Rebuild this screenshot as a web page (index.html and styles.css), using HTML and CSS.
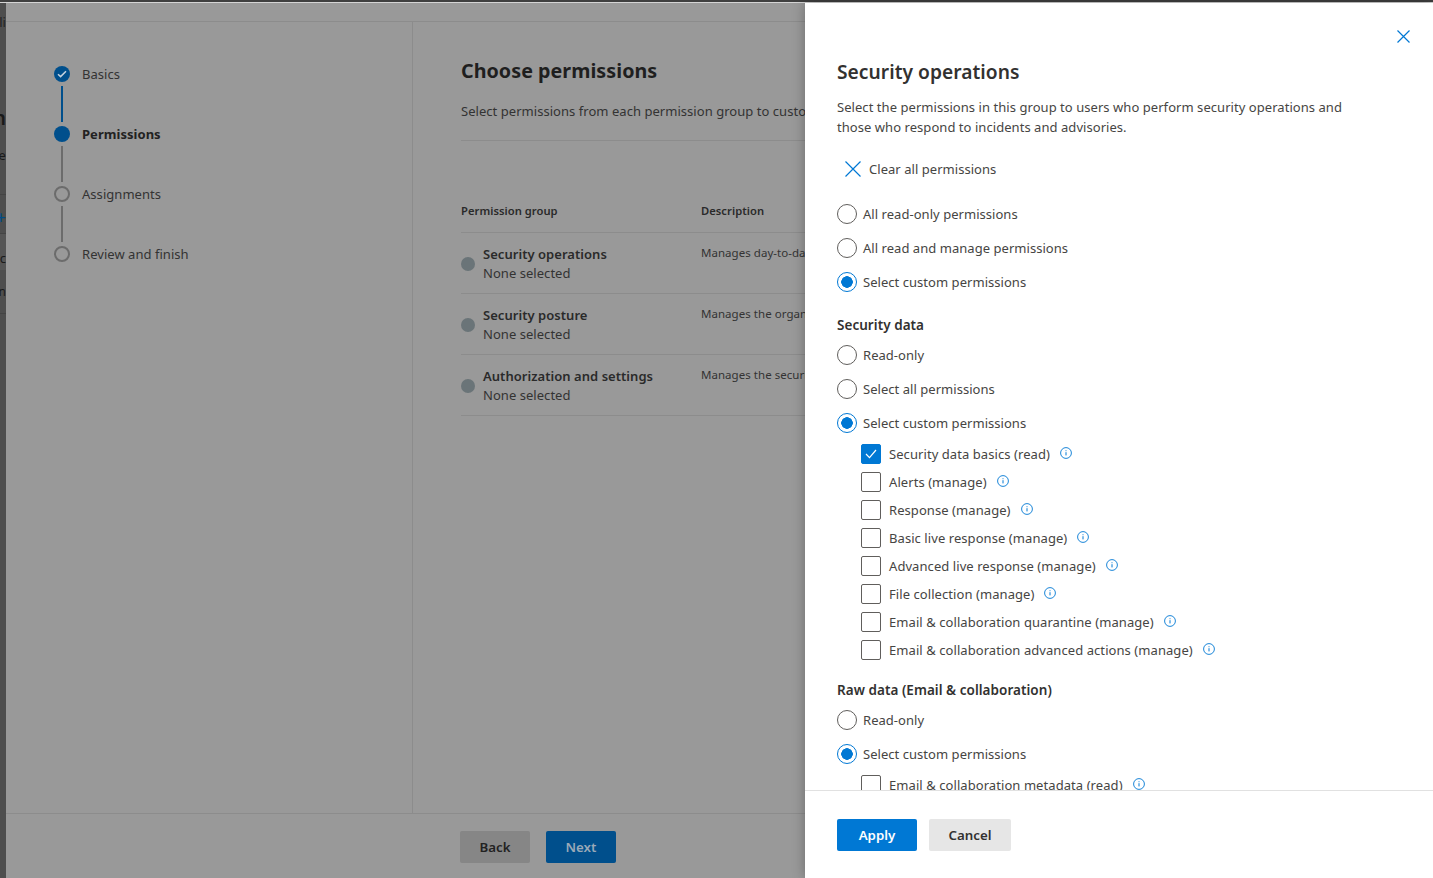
FILE: index.html
```html
<!DOCTYPE html>
<html lang="en">
<head>
  <meta charset="UTF-8">
  <title>Choose permissions</title>
  <link rel="stylesheet" href="styles.css">
</head>
<body>

<svg class="defs" width="0" height="0">
  <symbol id="info" viewBox="0 0 12 12">
    <circle cx="6" cy="6" r="5.4" fill="none" stroke="currentColor" stroke-width="0.9"/>
    <path d="M6 5.2v3.2M6 3.3v0.9" fill="none" stroke="currentColor" stroke-width="1"/>
  </symbol>
  <symbol id="cross" viewBox="0 0 16 16">
    <path d="M0.5 0.5l15 15M15.5 0.5l-15 15" fill="none" stroke="currentColor" stroke-width="1.2"/>
  </symbol>
  <symbol id="cross-small" viewBox="0 0 13 13">
    <path d="M0.5 0.5l12 12M12.5 0.5l-12 12" fill="none" stroke="currentColor" stroke-width="1.2"/>
  </symbol>
</svg>

<div class="topbar"></div>

<div class="page">
  <div class="strip">
    <div class="strip-row strip-nav"><span>Ali</span></div>
    <div class="strip-row strip-title"><span>Roles in</span></div>
    <div class="strip-row strip-sub"><span>Create</span></div>
    <div class="strip-row strip-add"><span>+</span></div>
    <div class="strip-row strip-cell"><span>Name c</span></div>
    <div class="strip-row strip-item"><span>Admin</span></div>
  </div>

  <div class="wizard">
    <div class="wizard-top"></div>

    <div class="wizard-body">
      <nav class="steps">
        <div class="step">
          <span class="dot dot-done">
            <svg width="10" height="8" viewBox="0 0 10 8"><path d="M1 4.2l2.6 2.4L9 1.2" fill="none" stroke="#c4d2de" stroke-width="1.5"/></svg>
          </span>
          <span class="step-name">Basics</span>
        </div>
        <div class="link link-done"></div>
        <div class="step">
          <span class="dot dot-current"></span>
          <span class="step-name step-bold">Permissions</span>
        </div>
        <div class="link"></div>
        <div class="step">
          <span class="dot"></span>
          <span class="step-name">Assignments</span>
        </div>
        <div class="link"></div>
        <div class="step">
          <span class="dot"></span>
          <span class="step-name">Review and finish</span>
        </div>
      </nav>

      <main class="content">
        <h1 class="content-title">Choose permissions</h1>
        <p class="content-sub">Select permissions from each permission group to customize what users assigned to this role can do.</p>

        <div class="table-head">
          <div class="col-group">Permission group</div>
          <div class="col-desc">Description</div>
        </div>

        <div class="table-row">
          <div class="col-group group-cell">
            <span class="status"></span>
            <div>
              <div class="group-name">Security operations</div>
              <div class="group-state">None selected</div>
            </div>
          </div>
          <div class="col-desc desc-cell">Manages day-to-day operations and responding to incidents and advisories</div>
        </div>
        <div class="table-row">
          <div class="col-group group-cell">
            <span class="status"></span>
            <div>
              <div class="group-name">Security posture</div>
              <div class="group-state">None selected</div>
            </div>
          </div>
          <div class="col-desc desc-cell">Manages the organization's security posture and vulnerabilities</div>
        </div>
        <div class="table-row">
          <div class="col-group group-cell">
            <span class="status"></span>
            <div>
              <div class="group-name">Authorization and settings</div>
              <div class="group-state">None selected</div>
            </div>
          </div>
          <div class="col-desc desc-cell">Manages the security settings and authorization of the system</div>
        </div>
      </main>
    </div>

    <div class="wizard-foot">
      <button class="btn btn-back">Back</button>
      <button class="btn btn-next">Next</button>
    </div>
  </div>

  <aside class="panel">
    <div class="panel-scroll">
      <div class="panel-close">
        <svg class="icon-close"><use href="#cross-small"/></svg>
      </div>
      <h2 class="panel-title">Security operations</h2>
      <p class="panel-desc">Select the permissions in this group to users who perform security operations and<br>those who respond to incidents and advisories.</p>

      <div class="clear-all">
        <svg class="icon-clear"><use href="#cross"/></svg>
        <span>Clear all permissions</span>
      </div>

      <div class="radio-group">
        <div class="radio"><span class="radio-mark"></span>All read-only permissions</div>
        <div class="radio"><span class="radio-mark"></span>All read and manage permissions</div>
        <div class="radio"><span class="radio-mark radio-on"></span>Select custom permissions</div>
      </div>

      <h3 class="section">Security data</h3>
      <div class="radio-group">
        <div class="radio"><span class="radio-mark"></span>Read-only</div>
        <div class="radio"><span class="radio-mark"></span>Select all permissions</div>
        <div class="radio"><span class="radio-mark radio-on"></span>Select custom permissions</div>
      </div>

      <div class="checks">
        <div class="check">
          <span class="box box-on">
            <svg width="12" height="10" viewBox="0 0 12 10"><path d="M1 5l3.5 3.6L11 1" fill="none" stroke="#fff" stroke-width="1.2"/></svg>
          </span>
          Security data basics (read)
          <svg class="icon-info"><use href="#info"/></svg>
        </div>
        <div class="check"><span class="box"></span>Alerts (manage)<svg class="icon-info"><use href="#info"/></svg></div>
        <div class="check"><span class="box"></span>Response (manage)<svg class="icon-info"><use href="#info"/></svg></div>
        <div class="check"><span class="box"></span>Basic live response (manage)<svg class="icon-info"><use href="#info"/></svg></div>
        <div class="check"><span class="box"></span>Advanced live response (manage)<svg class="icon-info"><use href="#info"/></svg></div>
        <div class="check"><span class="box"></span>File collection (manage)<svg class="icon-info"><use href="#info"/></svg></div>
        <div class="check"><span class="box"></span>Email &amp; collaboration quarantine (manage)<svg class="icon-info"><use href="#info"/></svg></div>
        <div class="check"><span class="box"></span>Email &amp; collaboration advanced actions (manage)<svg class="icon-info"><use href="#info"/></svg></div>
      </div>

      <h3 class="section">Raw data (Email &amp; collaboration)</h3>
      <div class="radio-group">
        <div class="radio"><span class="radio-mark"></span>Read-only</div>
        <div class="radio"><span class="radio-mark radio-on"></span>Select custom permissions</div>
      </div>

      <div class="checks">
        <div class="check"><span class="box"></span>Email &amp; collaboration metadata (read)<svg class="icon-info"><use href="#info"/></svg></div>
      </div>
    </div>

    <div class="panel-foot">
      <button class="btn btn-apply">Apply</button>
      <button class="btn btn-cancel">Cancel</button>
    </div>
  </aside>
</div>

</body>
</html>
```

FILE: styles.css
```css
* {
  box-sizing: border-box;
}

html, body {
  height: 100%;
}

body {
  margin: 0;
  display: flex;
  flex-direction: column;
  overflow: hidden;
  font-family: 'Noto Sans', 'Open Sans', sans-serif;
  font-size: 13px;
  letter-spacing: 0.04px;
  color: #2a2a2a;
  background-color: #999;
}

.defs {
  position: absolute;
}

.topbar {
  height: 3px;
  flex: none;
  background-color: #3f3f3f;
  border-bottom: 1px solid #d4d4d4;
}

.page {
  flex: 1;
  min-height: 0;
  display: flex;
}

/* page behind the wizard, only its last pixels show */
.strip {
  width: 6px;
  flex: none;
  overflow: hidden;
  background-color: #4e4e4e;
  color: #1a1a1a;
}

.strip-row {
  display: flex;
  justify-content: flex-end;
  white-space: nowrap;
  line-height: 20px;
}

.strip-nav {
  margin-top: 9px;
  color: #222;
}

.strip-title {
  margin-top: 72px;
  font-size: 20px;
  font-weight: 600;
  line-height: 28px;
}

.strip-sub {
  margin-top: 13px;
}

.strip-add {
  margin-top: 29px;
  padding-top: 12px;
  font-size: 18px;
  color: #004c87;
  border-top: 1px solid #444;
}

.strip-cell {
  margin-top: 6px;
  padding: 14px 0 2px;
  background-color: #555;
  border-top: 1px solid #444;
}

.strip-item {
  padding: 12px 0 11px;
  font-size: 12px;
  border-bottom: 1px solid #444;
}

.wizard {
  width: 799px;
  flex: none;
  min-width: 0;
  display: flex;
  flex-direction: column;
  overflow: hidden;
  background-color: #999;
}

.wizard-top {
  height: 19px;
  flex: none;
  border-bottom: 1px solid #8c8c8c;
}

.wizard-body {
  flex: 1;
  min-height: 0;
  display: flex;
}

.steps {
  width: 407px;
  flex: none;
  padding: 42px 0 0 48px;
  border-right: 1px solid #8c8c8c;
}

.step {
  height: 20px;
  display: flex;
  align-items: center;
  gap: 12px;
  white-space: nowrap;
}

.dot {
  width: 16px;
  height: 16px;
  flex: none;
  display: flex;
  align-items: center;
  justify-content: center;
  border: 2px solid #6c6c6c;
  border-radius: 50%;
}

.dot-done,
.dot-current {
  border: none;
  background-color: #004f8c;
}

.step-name {
  color: #333;
}

.step-bold {
  font-weight: 700;
  color: #222;
}

.link {
  width: 2px;
  height: 36px;
  margin: 2px 0 2px 7px;
  background-color: #6c6c6c;
}

.link-done {
  background-color: #004f8c;
}

.content {
  flex: 1;
  min-width: 0;
  padding: 35px 0 0 48px;
  white-space: nowrap;
}

.content-title {
  margin: 0;
  font-size: 19.7px;
  font-weight: 700;
  line-height: 28px;
  color: #1f1f1f;
}

.content-sub {
  margin: 16px 0 0;
  height: 40px;
  line-height: 20px;
  color: #333;
  border-bottom: 1px solid #8c8c8c;
}

.table-head {
  height: 92px;
  display: flex;
  align-items: flex-end;
  padding-bottom: 14px;
  font-size: 11.2px;
  font-weight: 600;
  border-bottom: 1px solid #8c8c8c;
}

.col-group {
  width: 240px;
  flex: none;
}

.table-row {
  height: 61px;
  display: flex;
  border-bottom: 1px solid #8c8c8c;
}

.group-cell {
  display: flex;
  align-items: center;
  gap: 8px;
  padding-top: 2px;
  line-height: 19px;
}

.status {
  width: 14px;
  height: 14px;
  flex: none;
  border-radius: 50%;
  background-color: #6a7478;
}

.group-name {
  font-weight: 600;
  color: #2a2a2a;
}

.group-state {
  color: #333;
}

.desc-cell {
  padding-top: 11px;
  font-size: 11.5px;
  line-height: 18px;
  color: #333;
}

.wizard-foot {
  height: 65px;
  flex: none;
  display: flex;
  gap: 16px;
  padding: 17px 0 0 454px;
  border-top: 1px solid #8c8c8c;
}

.btn {
  height: 32px;
  border: none;
  border-radius: 2px;
  font-family: inherit;
  font-size: 13.3px;
  font-weight: 600;
}

.btn-back {
  width: 70px;
  background-color: #868686;
  color: #222;
}

.btn-next {
  width: 70px;
  background-color: #004f8c;
  color: #99a9b8;
}

.panel {
  flex: 1;
  min-width: 0;
  display: flex;
  flex-direction: column;
  background-color: #fff;
  box-shadow: 0 0 12px rgba(0, 0, 0, 0.3);
  color: #464543;
}

.panel-scroll {
  flex: 1;
  min-height: 0;
  overflow: hidden;
  padding: 0 0 0 32px;
  white-space: nowrap;
}

.panel-close {
  display: flex;
  justify-content: flex-end;
  padding: 27px 23px 0 0;
  height: 55px;
}

.icon-close {
  width: 13px;
  height: 13px;
  color: #0078d4;
}

.panel-title {
  margin: 0;
  font-size: 19.2px;
  font-weight: 600;
  line-height: 28px;
  color: #323130;
}

.panel-desc {
  margin: 11px 0 0;
  line-height: 20px;
  letter-spacing: 0.05px;
}

.clear-all {
  height: 20px;
  margin-top: 22px;
  padding-left: 8px;
  display: flex;
  align-items: center;
  gap: 8px;
}

.icon-clear {
  width: 16px;
  height: 16px;
  color: #0078d4;
}

.radio-group {
  margin-top: 8px;
}

.clear-all + .radio-group {
  margin-top: 18px;
}

.radio {
  height: 34px;
  display: flex;
  align-items: center;
  gap: 6px;
}

.radio-mark {
  width: 20px;
  height: 20px;
  flex: none;
  border: 1px solid #605e5c;
  border-radius: 50%;
}

.radio-on {
  border-color: #0078d4;
  background: radial-gradient(circle, #0078d4 0 5.5px, #fff 6px);
}

.section {
  margin: 16px 0 0;
  font-size: 13.5px;
  font-weight: 600;
  line-height: 20px;
  color: #323130;
}

.section + .radio-group {
  margin-top: 3px;
}

.checks {
  margin-top: 0;
  padding-left: 24px;
  letter-spacing: 0.07px;
}

.check {
  height: 28px;
  display: flex;
  align-items: center;
}

.box {
  width: 20px;
  height: 20px;
  flex: none;
  margin-right: 8px;
  display: flex;
  align-items: center;
  justify-content: center;
  border: 1px solid #605e5c;
  border-radius: 2px;
}

.box-on {
  border-color: #0078d4;
  background-color: #0078d4;
}

.icon-info {
  width: 12px;
  height: 12px;
  margin: -3px 0 0 10px;
  color: #0078d4;
}

.panel-foot {
  height: 88px;
  flex: none;
  display: flex;
  gap: 12px;
  padding: 28px 0 0 32px;
  border-top: 1px solid #e1e1e1;
}

.btn-apply {
  width: 80px;
  background-color: #0078d4;
  color: #fff;
}

.btn-cancel {
  width: 82px;
  background-color: #e6e6e6;
  color: #323130;
}
```
